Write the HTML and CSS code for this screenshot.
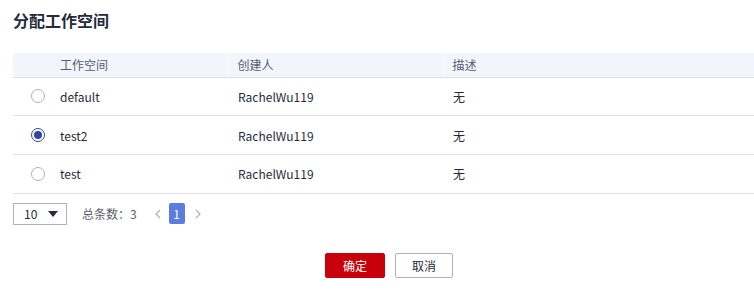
FILE: index.html
```html
<!DOCTYPE html>
<html>
<head>
<meta charset="utf-8">
<link rel="stylesheet" href="styles.css">
</head>
<body>
<div class="dialog">
  <h1 class="title">分配工作空间</h1>
  <table class="grid">
    <colgroup>
      <col class="c-radio"><col class="c-name"><col class="c-creator"><col class="c-desc">
    </colgroup>
    <thead>
      <tr>
        <th></th>
        <th class="sep-none">工作空间</th>
        <th class="sep">创建人</th>
        <th class="sep">描述</th>
      </tr>
    </thead>
    <tbody>
      <tr>
        <td><span class="radio"></span></td>
        <td>default</td>
        <td class="pl">RachelWu119</td>
        <td class="pl">无</td>
      </tr>
      <tr>
        <td><span class="radio checked"></span></td>
        <td>test2</td>
        <td class="pl">RachelWu119</td>
        <td class="pl">无</td>
      </tr>
      <tr>
        <td><span class="radio"></span></td>
        <td>test</td>
        <td class="pl">RachelWu119</td>
        <td class="pl">无</td>
      </tr>
    </tbody>
  </table>
  <div class="pager">
    <div class="size">
      <span>10</span>
      <svg width="10" height="6" viewBox="0 0 10 6"><path d="M0 0H10L5 6Z" fill="#252b3a"/></svg>
    </div>
    <span class="total">总条数：3</span>
    <svg class="arrow" width="6" height="10" viewBox="0 0 6 10"><path d="M5 1L1 5L5 9" fill="none" stroke="#adb0b8" stroke-width="1.2"/></svg>
    <span class="page">1</span>
    <svg class="arrow" width="6" height="10" viewBox="0 0 6 10"><path d="M1 1L5 5L1 9" fill="none" stroke="#adb0b8" stroke-width="1.2"/></svg>
  </div>
  <div class="actions">
    <button class="btn primary">确定</button>
    <button class="btn">取消</button>
  </div>
</div>
</body>
</html>
```

FILE: styles.css
```css
* { box-sizing: border-box; }
html, body { margin: 0; padding: 0; background: #fff; }
body {
  font-family: "Noto Sans CJK SC", "Noto Sans", sans-serif;
  font-size: 12px;
  color: #252b3a;
}
.dialog { padding: 8px 0 0 13px; }
.title {
  margin: 0;
  font-size: 16px;
  font-weight: 700;
  line-height: 24px;
  color: #252b3a;
}
.grid {
  margin-top: 21px;
  width: 741px;
  border-collapse: collapse;
  table-layout: fixed;
}
.c-radio { width: 47px; }
.c-name { width: 168px; }
.c-creator { width: 215px; }
.grid th {
  background: #f2f5fc;
  height: 24px;
  padding: 0;
  text-align: left;
  font-weight: 400;
  color: #575d6c;
  border-bottom: 1px solid #dfe1e6;
}
.grid th.sep { border-left: 1px solid #fff; padding-left: 9px; }
.grid td {
  height: 38.7px;
  padding: 0;
  border-bottom: 1px solid #dfe1e6;
}
.grid td.pl { padding-left: 10px; }
.radio {
  display: block;
  width: 14px;
  height: 14px;
  margin-left: 18px;
  border: 1px solid #adb0b8;
  border-radius: 50%;
  position: relative;
}
.radio.checked { border-color: #344899; }
.radio.checked::after {
  content: "";
  position: absolute;
  left: 2px; top: 2px;
  width: 8px; height: 8px;
  border-radius: 50%;
  background: #344899;
}
.pager {
  display: flex;
  align-items: center;
  margin-top: 9px;
  height: 22px;
}
.size {
  width: 54px;
  height: 22px;
  border: 1px solid #adb0b8;
  display: flex;
  align-items: center;
  justify-content: space-between;
  padding: 0 8px 0 10px;
}
.total { margin-left: 15px; color: #575d6c; }
.arrow { margin-left: 18px; }
.page {
  margin-left: 8px;
  width: 16px;
  height: 21px;
  background: #5e7ce0;
  color: #fff;
  border-radius: 2px;
  display: flex;
  align-items: center;
  justify-content: center;
}
.page + .arrow { margin-left: 10px; }
.actions {
  display: flex;
  justify-content: center;
  gap: 10px;
  margin-top: 28px;
  width: 741px;
  padding-left: 11px;
}
.btn {
  font-family: inherit;
  font-size: 12px;
  width: 58px;
  height: 25px;
  padding: 0;
  border: 1px solid #adb0b8;
  background: #fff;
  color: #252b3a;
  border-radius: 2px;
}
.btn.primary {
  width: 60px;
  background: #c7000b;
  border-color: #c7000b;
  color: #fff;
}
```
